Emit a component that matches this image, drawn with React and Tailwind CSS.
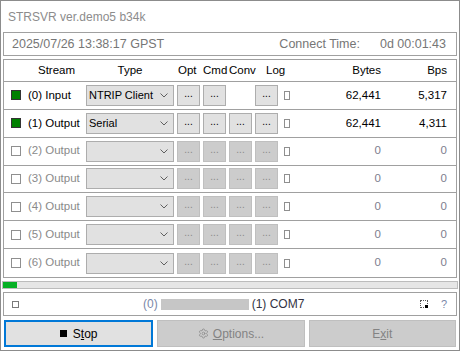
import React from 'react';
import { Settings } from 'lucide-react';

const streams = [
  { label: '(0) Input', type: 'NTRIP Client', on: true, bytes: '62,441', bps: '5,317', conv: false },
  { label: '(1) Output', type: 'Serial', on: true, bytes: '62,441', bps: '4,311', conv: true },
  { label: '(2) Output', type: '', on: false, bytes: '0', bps: '0', conv: true },
  { label: '(3) Output', type: '', on: false, bytes: '0', bps: '0', conv: true },
  { label: '(4) Output', type: '', on: false, bytes: '0', bps: '0', conv: true },
  { label: '(5) Output', type: '', on: false, bytes: '0', bps: '0', conv: true },
  { label: '(6) Output', type: '', on: false, bytes: '0', bps: '0', conv: true },
];

const DotButton = ({ on }) => (
  <div
    className={`w-[23px] h-[21px] flex items-center justify-center border text-[10px] leading-none pb-[3px] ${
      on ? 'bg-[#e1e1e1] border-[#adadad] text-black' : 'bg-[#cccccc] border-[#bfbfbf] text-[#8a8a8a]'
    }`}
  >
    ...
  </div>
);

const StreamRow = ({ s, last }) => (
  <div className={`flex items-center h-[28px] ${last ? 'h-[27px]' : 'border-b border-[#a0a0a0]'}`}>
    {/* checkbox + label */}
    <div className="w-[82px] flex items-center pl-[7px]">
      {s.on ? (
        <div className="w-[10px] h-[10px] border border-[#333333] bg-[#008000]" />
      ) : (
        <div className="w-[10px] h-[10px] border border-[#8f8f8f] bg-white" />
      )}
      <span className={`ml-[7px] text-[11.5px] ${s.on ? 'text-black' : 'text-[#8a8a8a]'}`}>{s.label}</span>
    </div>

    {/* type select */}
    <div className="w-[88px] h-[21px] flex items-center justify-between bg-[#e1e1e1] border border-[#adadad] pl-[2px] pr-[5px]">
      <span className="text-[11px] text-black whitespace-nowrap">{s.type}</span>
      <svg width="8" height="5" viewBox="0 0 8 5">
        <polyline points="0.5,0.5 4,4 7.5,0.5" fill="none" stroke="#606060" strokeWidth="1" />
      </svg>
    </div>

    {/* opt / cmd / conv / log */}
    <div className="flex gap-[3px] ml-[3px]">
      <DotButton on={s.on} />
      <DotButton on={s.on} />
      {s.conv ? <DotButton on={s.on} /> : <div className="w-[23px]" />}
      <DotButton on={s.on} />
    </div>
    <div className="ml-[6px] w-[6px] h-[9px] border border-[#8f8f8f]" />

    {/* bytes / bps */}
    <div className={`w-[91px] text-right text-[11.5px] ${s.on ? 'text-black' : 'text-[#7e7e8e]'}`}>{s.bytes}</div>
    <div className={`w-[66px] text-right text-[11.5px] ${s.on ? 'text-black' : 'text-[#7e7e8e]'}`}>{s.bps}</div>
  </div>
);

export default function App() {
  return (
    <div className="w-[460px] h-[351px] border border-[#8c8c8c] bg-white flex flex-col font-['Liberation_Sans',Arial,sans-serif] overflow-hidden">
      {/* Title */}
      <div className="h-[31px] flex items-center pl-[7px] text-[12px] text-[#8c8c8c]">STRSVR ver.demo5 b34k</div>

      {/* Time panel */}
      <div className="mx-[2px] h-[24px] border border-[#a0a0a0] flex items-center pl-[8px] pr-[10px] text-[12.5px] text-[#767676]">
        <span>2025/07/26 13:38:17 GPST</span>
        <span className="ml-auto">Connect Time:</span>
        <span className="ml-[20px]">0d 00:01:43</span>
      </div>

      {/* Stream table */}
      <div className="mx-[2px] mt-[3px] h-[219px] border border-[#a0a0a0] flex flex-col">
        <div className="h-[22px] flex items-center border-b border-[#a0a0a0] text-[11.5px] text-black">
          <div className="w-[82px] pl-[34px]">Stream</div>
          <div className="w-[88px] text-center">Type</div>
          <div className="ml-[4px] w-[25px]">Opt</div>
          <div className="w-[26px]">Cmd</div>
          <div className="w-[37px]">Conv</div>
          <div className="w-[24px]">Log</div>
          <div className="w-[91px] text-right">Bytes</div>
          <div className="w-[66px] text-right">Bps</div>
        </div>
        {streams.map((s, i) => (
          <StreamRow key={i} s={s} last={i === streams.length - 1} />
        ))}
      </div>

      {/* Progress */}
      <div className="mx-[1px] mt-[3px] h-[8px] border border-[#bcbcbc] bg-[#e6e6e6] flex">
        <div className="w-[14px] bg-[#06b025]" />
      </div>

      {/* Status */}
      <div className="mx-[2px] mt-[3px] h-[24px] border border-[#a0a0a0] flex items-center pl-[8px] pr-[9px] text-[12px]">
        <div className="w-[7px] h-[7px] border border-[#7a7a7a]" />
        <span className="ml-[124px] text-[#7a88a8]">(0)</span>
        <div className="ml-[3px] w-[88px] h-[11px] bg-[#c6c6c6]" />
        <span className="ml-[3px] text-[#333344]">(1) COM7</span>
        <div className="ml-auto relative w-[8px] h-[8px] border border-dotted border-[#555555]">
          <div className="absolute right-[-1px] bottom-[-1px] w-[3px] h-[3px] bg-black" />
        </div>
        <span className="ml-[13px] text-[#7a88a8] text-[11px]">?</span>
      </div>

      {/* Buttons */}
      <div className="mx-[3px] mt-[4px] flex gap-[4px] h-[27px]">
        <div className="flex-1 flex items-center justify-center bg-[#e1e1e1] border-2 border-[#0078d7] text-[12px] text-black">
          <div className="w-[7px] h-[7px] bg-black mr-[6px]" />
          <span>
            S<span className="underline">t</span>op
          </span>
        </div>
        <div className="flex-1 flex items-center justify-center bg-[#cccccc] border border-[#bfbfbf] text-[12px] text-[#838383]">
          <Settings size={11} strokeWidth={1.5} className="mr-[4px]" />
          <span>
            <span className="underline">O</span>ptions...
          </span>
        </div>
        <div className="flex-1 flex items-center justify-center bg-[#cccccc] border border-[#bfbfbf] text-[12px] text-[#838383]">
          <span>
            E<span className="underline">x</span>it
          </span>
        </div>
      </div>
    </div>
  );
}
